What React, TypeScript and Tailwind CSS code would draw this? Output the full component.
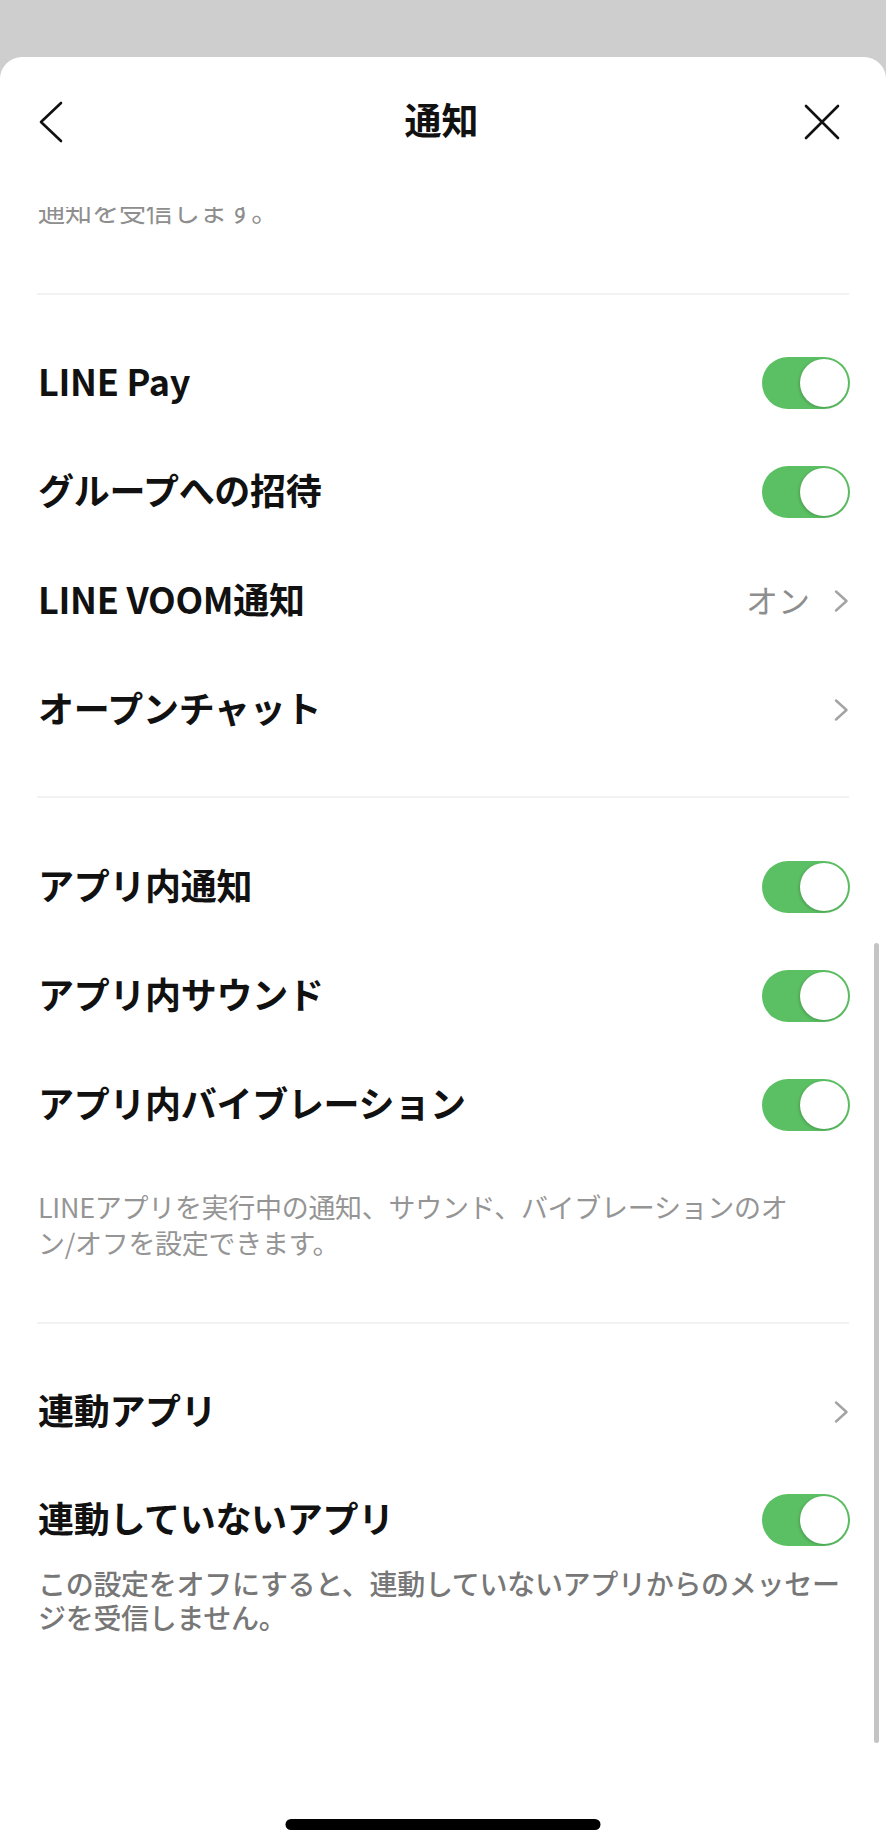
import React from "react";

const font = "font-['Noto_Sans_CJK_JP','Noto_Sans',sans-serif]";

const Toggle = () => (
  <div className="w-[88px] h-[52px] rounded-full bg-[#5bbf63] flex items-center justify-end pr-[2px]">
    <div className="w-[48px] h-[48px] rounded-full bg-white shadow-[-1px_1px_3px_rgba(0,0,0,0.18)]" />
  </div>
);

const Chevron = () => (
  <svg width="15" height="22" viewBox="0 0 15 22" fill="none">
    <path d="M2 1.5 L12.5 11 L2 20.5" stroke="#a3a3a3" strokeWidth="2.4" strokeLinecap="round" strokeLinejoin="round" />
  </svg>
);

type Row = { label: string; kind: "toggle" | "link"; value?: string };

const SettingRow = ({ row, className = "h-[109px]" }: { row: Row; className?: string }) => (
  <div className={`flex items-center justify-between ${className}`}>
    <span className="mb-[6px] text-[36px] font-bold text-[#111] tracking-[-0.3px]">{row.label}</span>
    {row.kind === "toggle" ? (
      <Toggle />
    ) : (
      <div className="flex items-center gap-[24px] pr-[1px]">
        {row.value && <span className="mb-[4px] text-[32px] text-[#8e8e8e]">{row.value}</span>}
        <Chevron />
      </div>
    )}
  </div>
);

const Divider = ({ className }: { className: string }) => (
  <div className={`h-[2px] bg-[#f2f2f2] ${className}`} />
);

export default function App() {
  const first: Row[] = [
    { label: "LINE Pay", kind: "toggle" },
    { label: "グループへの招待", kind: "toggle" },
    { label: "LINE VOOM通知", kind: "link", value: "オン" },
    { label: "オープンチャット", kind: "link" },
  ];
  const inApp: Row[] = [
    { label: "アプリ内通知", kind: "toggle" },
    { label: "アプリ内サウンド", kind: "toggle" },
    { label: "アプリ内バイブレーション", kind: "toggle" },
  ];

  return (
    <div className={`w-full min-h-screen bg-[#cecece] pt-[57px] ${font}`}>
      <div className="relative h-[1791px] bg-white rounded-t-[22px] flex flex-col overflow-hidden">
        {/* Header */}
        <div className="h-[150px] shrink-0">
          <div className="h-[130px] grid grid-cols-[1fr_auto_1fr] items-center pl-[38px] pr-[45px]">
            <svg width="26" height="42" viewBox="0 0 26 42" fill="none">
              <path d="M23 2 L3 21 L23 40" stroke="#111" strokeWidth="2.6" strokeLinecap="round" strokeLinejoin="round" />
            </svg>
            <span className="mb-[4px] ml-[4px] text-[37px] font-bold text-[#111]">通知</span>
            <svg width="38" height="36" viewBox="0 0 38 36" fill="none" className="justify-self-end">
              <path d="M3 2 L35 34 M35 2 L3 34" stroke="#111" strokeWidth="2.6" strokeLinecap="round" />
            </svg>
          </div>
        </div>

        {/* Scrolling content */}
        <div className="flex-1 overflow-hidden">
          <p className="-mt-[14px] px-[38px] text-[27px] leading-[36px] text-[#8e8e8e]">通知を受信します。</p>
          <Divider className="mt-[64px] mx-[37px]" />

          <div className="pt-[33px] pl-[38px] pr-[36px]">
            {first.map((r) => (
              <SettingRow key={r.label} row={r} />
            ))}
          </div>
          <Divider className="mt-[32px] mx-[37px]" />

          <div className="pt-[34px] pl-[38px] pr-[36px]">
            {inApp.map((r) => (
              <SettingRow key={r.label} row={r} />
            ))}
            <p className="mt-[30px] text-[27px] leading-[36px] text-[#959595] tracking-[-0.3px]">
              LINEアプリを実行中の通知、サウンド、バイブレーションのオ
              <br />
              ン/オフを設定できます。
            </p>
          </div>
          <Divider className="mt-[61px] mx-[37px]" />

          <div className="pt-[33px] pl-[38px] pr-[36px]">
            <SettingRow row={{ label: "連動アプリ", kind: "link" }} />
            <SettingRow row={{ label: "連動していないアプリ", kind: "toggle" }} className="h-[100px] pt-[8px]" />
            <p className="text-[28px] leading-[34px] font-medium text-[#777] tracking-[-0.3px]">
              この設定をオフにすると、連動していないアプリからのメッセー
              <br />
              ジを受信しません。
            </p>
          </div>
        </div>

        {/* scroll indicator */}
        <div className="absolute right-[7px] top-[886px] w-[5px] h-[800px] rounded-full bg-[#c4c4c4]" />
        {/* home indicator */}
        <div className="absolute bottom-[18px] left-1/2 -translate-x-1/2 w-[315px] h-[11px] rounded-full bg-black" />
      </div>
    </div>
  );
}
